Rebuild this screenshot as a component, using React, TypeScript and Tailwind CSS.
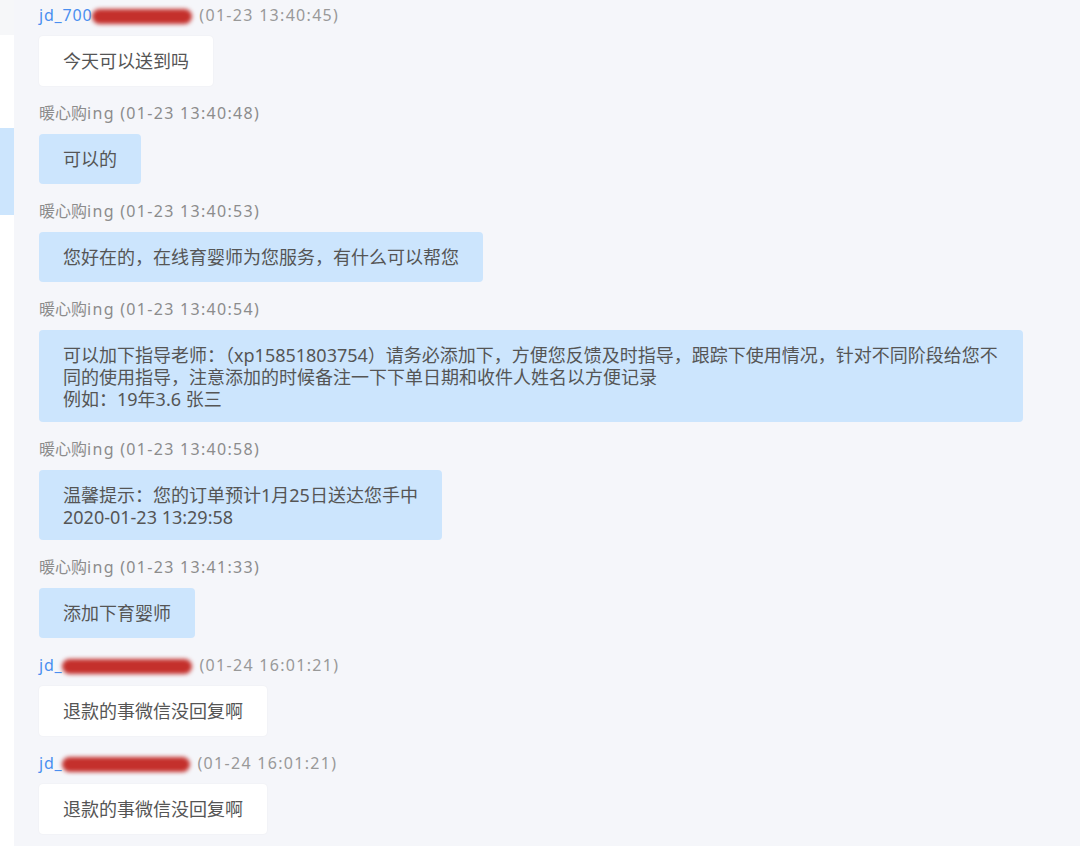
type Msg = {
  cjk?: string
  latin?: string
  masked?: { before: string; width: number }
  time: string
  mine: boolean
  lines: string[]
}

const me = { cjk: '暖心购', latin: 'ing' }

const messages: Msg[] = [
  { masked: { before: 'jd_700', width: 100 }, time: '(01-23 13:40:45)', mine: false, lines: ['今天可以送到吗'] },
  { ...me, time: '(01-23 13:40:48)', mine: true, lines: ['可以的'] },
  { ...me, time: '(01-23 13:40:53)', mine: true, lines: ['您好在的，在线育婴师为您服务，有什么可以帮您'] },
  {
    ...me,
    time: '(01-23 13:40:54)',
    mine: true,
    lines: [
      '可以加下指导老师：（xp15851803754）请务必添加下，方便您反馈及时指导，跟踪下使用情况，针对不同阶段给您不同的使用指导，注意添加的时候备注一下下单日期和收件人姓名以方便记录',
      '例如：19年3.6 张三',
    ],
  },
  { ...me, time: '(01-23 13:40:58)', mine: true, lines: ['温馨提示：您的订单预计1月25日送达您手中', '2020-01-23 13:29:58'] },
  { ...me, time: '(01-23 13:41:33)', mine: true, lines: ['添加下育婴师'] },
  { masked: { before: 'jd_', width: 130 }, time: '(01-24 16:01:21)', mine: false, lines: ['退款的事微信没回复啊'] },
  { masked: { before: 'jd_', width: 128 }, time: '(01-24 16:01:21)', mine: false, lines: ['退款的事微信没回复啊'] },
]

function Header({ m }: { m: Msg }) {
  if (m.masked) {
    return (
      <div className="flex items-center h-[22px] leading-[22px] text-[16px]">
        <span className="text-[#4a8ff0] tracking-[0.8px]">{m.masked.before}</span>
        <span className="relative inline-block h-[22px]" style={{ width: m.masked.width }}>
          <span className="absolute left-0 right-0 top-[5px] h-[15px] rounded-full bg-[#c4302c] blur-[2px]" />
        </span>
        <span className="ml-[7px] text-[#999] tracking-[1.3px]">{m.time}</span>
      </div>
    )
  }
  return (
    <div className="h-[22px] leading-[22px] text-[16px] text-[#8c8c8c] whitespace-pre">
      <span>{m.cjk}</span>
      <span className="tracking-[1.3px]">{m.latin} {m.time}</span>
    </div>
  )
}

export default function App() {
  return (
    <div className="flex w-[1080px] h-[850px] overflow-hidden bg-white" style={{ fontFamily: '"Noto Sans", "Noto Sans CJK SC", sans-serif' }}>
      <div className="w-[14px] flex flex-col shrink-0">
        <div className="h-[35px] bg-[#f6f7f9]" />
        <div className="h-[93px] bg-white" />
        <div className="h-[87px] bg-[#cce5fd]" />
        <div className="flex-1 bg-white" />
      </div>
      <div className="flex-1 bg-[#f5f6fa] pl-[25px] pt-[4px] h-[846px]">
        {messages.map((m, i) => (
          <div key={i} className="mb-[16px]">
            <Header m={m} />
            <div
              className={`mt-[10px] inline-block max-w-[984px] min-h-[50px] rounded-[4px] px-[24px] pt-[14px] pb-[12px] text-[18px] leading-[22px] text-[#555] ${
                m.mine ? 'bg-[#cce5fd]' : 'bg-white shadow-[0_0_2px_rgba(0,0,0,0.06)]'
              }`}
            >
              {m.lines.map((l, j) => (
                <div key={j}>{l}</div>
              ))}
            </div>
          </div>
        ))}
      </div>
    </div>
  )
}
